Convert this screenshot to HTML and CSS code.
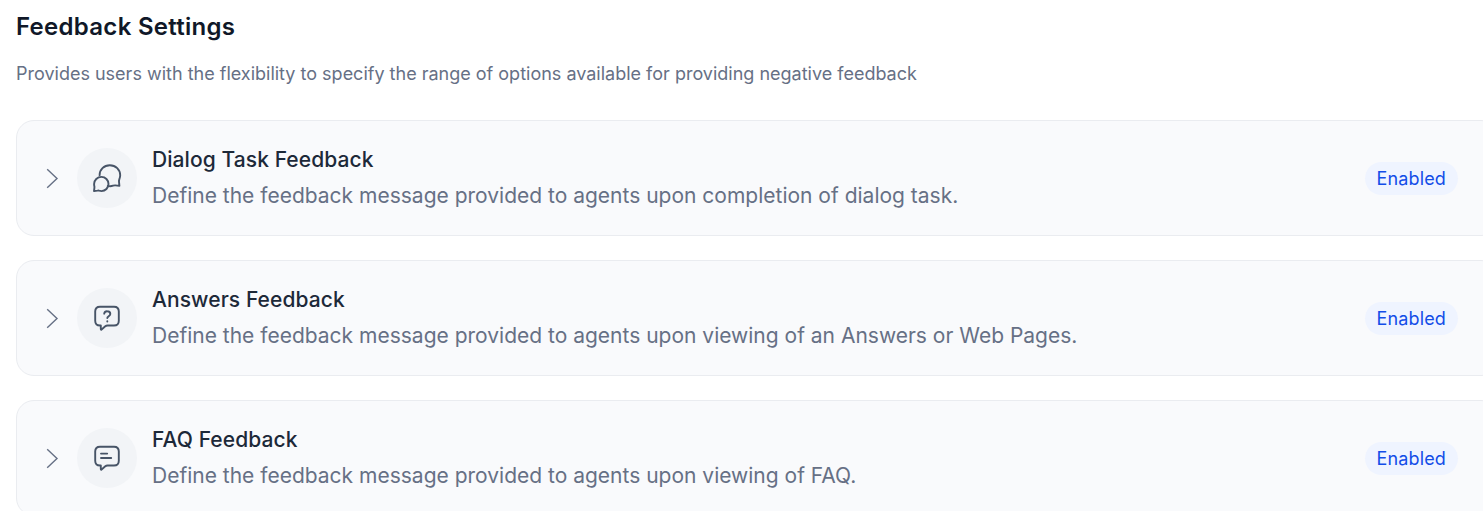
FILE: index.html
```html
<!DOCTYPE html>
<html lang="en">
<head>
<meta charset="utf-8">
<title>Feedback Settings</title>
<link rel="stylesheet" href="styles.css">
</head>
<body>
<main class="page">
  <h1 class="page-title">Feedback Settings</h1>
  <p class="page-intro">Provides users with the flexibility to specify the range of options available for providing negative feedback</p>
  <div class="cards">
    <section class="card">
      <svg class="chevron" viewBox="0 0 12 20"><path d="M1.200 1.300l9.800 9.200-9.800 9.200"/></svg>
      <div class="icon"><svg viewBox="0 0 30 30"><path d="M7.6 12.3C7.5 6.6 12 2.2 17.8 2.2c5.9 0 10.4 4.500 10.400 10.100 0 1.400-.4 2.800-.9 4-.4 1-.4 1.500-.3 2.400l.4 4.200-4-.5c-1-.1-1.400 0-2.300.3-1.500.5-3.300.7-5.300.2"/><path d="M9.400 13.900c4 0 7.100 3.200 7.100 7.100s-3.100 7.100-7.100 7.100c-.8 0-1.600-.2-2.300-.4-.6-.2-1-.2-1.600-.1l-3.500.5.4-3.200c.1-.7.100-1.100-.1-1.800-.2-.7-.2-1.400-.2-2.100 0-3.900 3.300-7.100 7.300-7.100z"/></svg></div>
      <div class="copy">
        <h2 class="card-title">Dialog Task Feedback</h2>
        <p class="card-text">Define the feedback message provided to agents upon completion of dialog task.</p>
      </div>
      <span class="badge">Enabled</span>
    </section>
    <section class="card">
      <svg class="chevron" viewBox="0 0 12 20"><path d="M1.200 1.300l9.800 9.200-9.800 9.200"/></svg>
      <div class="icon"><svg viewBox="0 0 30 30"><path d="M8 3.700h14c3.500 0 4.800 1.300 4.800 4.800v9.200c0 3.500-1.300 4.800-4.800 4.800h-6.500c-1 0-1.500.2-2.200.8l-3.700 3.100c-.6.5-.8.4-.8-.3v-3.600h-.8c-3.500 0-4.800-1.300-4.800-4.800V8.500C3.200 5 4.500 3.700 8 3.700z"/><path d="M12.200 10.700c.3-1.700 1.600-2.600 3.100-2.500 1.700 0 3 1.100 3 2.700 0 2.200-3 2.400-3 4.200M15.300 18.300v.2"/></svg></div>
      <div class="copy">
        <h2 class="card-title">Answers Feedback</h2>
        <p class="card-text">Define the feedback message provided to agents upon viewing of an Answers or Web Pages.</p>
      </div>
      <span class="badge">Enabled</span>
    </section>
    <section class="card">
      <svg class="chevron" viewBox="0 0 12 20"><path d="M1.200 1.300l9.800 9.200-9.800 9.200"/></svg>
      <div class="icon"><svg viewBox="0 0 30 30"><path d="M8 3.700h14c3.500 0 4.800 1.300 4.800 4.800v9.200c0 3.500-1.300 4.800-4.800 4.800h-6.500c-1 0-1.500.2-2.200.8l-3.700 3.100c-.6.5-.8.4-.8-.3v-3.600h-.8c-3.500 0-4.800-1.300-4.800-4.800V8.500C3.200 5 4.500 3.700 8 3.700z"/><path d="M9 10.600h6.200M9 15h10.200"/></svg></div>
      <div class="copy">
        <h2 class="card-title">FAQ Feedback</h2>
        <p class="card-text">Define the feedback message provided to agents upon viewing of FAQ.</p>
      </div>
      <span class="badge">Enabled</span>
    </section>
  </div>
</main>
</body>
</html>
```
FILE: styles.css
```css
* { box-sizing: border-box; }
body {
  margin: 0;
  height: 511px;
  overflow: hidden;
  background: #fff;
  font-family: Inter, "Liberation Sans", sans-serif;
}
.page { width: 1499px; padding: 12px 0 0 16px; }
.page-title {
  margin: 0;
  font-size: 24px;
  line-height: 30px;
  font-weight: 600;
  letter-spacing: 0.28px;
  color: #101828;
}
.page-intro {
  margin: 18px 0 0;
  font-size: 18px;
  line-height: 27px;
  color: #667085;
}
.cards { display: flex; flex-direction: column; gap: 24px; margin-top: 33px; }
.card {
  display: flex;
  align-items: center;
  height: 116px;
  padding: 0 40px 0 29px;
  border: 1px solid #eaecf0;
  border-radius: 18px;
  background: #f9fafc;
}
.chevron {
  width: 12px;
  height: 20px;
  overflow: visible;
  fill: none;
  stroke: #667085;
  stroke-width: 1.4;
}
.icon {
  display: flex;
  align-items: center;
  justify-content: center;
  width: 60px;
  height: 60px;
  margin-left: 19px;
  border-radius: 50%;
  background: #f2f4f7;
}
.icon svg {
  width: 30px;
  height: 30px;
  fill: none;
  stroke: #475467;
  stroke-width: 1.9;
  stroke-linecap: round;
  stroke-linejoin: round;
}
.copy { flex: 1; margin-left: 15px; }
.card-title {
  margin: 0;
  font-size: 21px;
  line-height: 30px;
  font-weight: 500;
  letter-spacing: 0.08px;
  color: #1d2939;
}
.card-text {
  margin: 6px 0 0;
  font-size: 21px;
  line-height: 30px;
  color: #667085;
}
.badge {
  padding: 3px 12px;
  border-radius: 17px;
  background: #eff4ff;
  font-size: 18px;
  line-height: 27px;
  letter-spacing: 0.14px;
  color: #124de8;
}
```
